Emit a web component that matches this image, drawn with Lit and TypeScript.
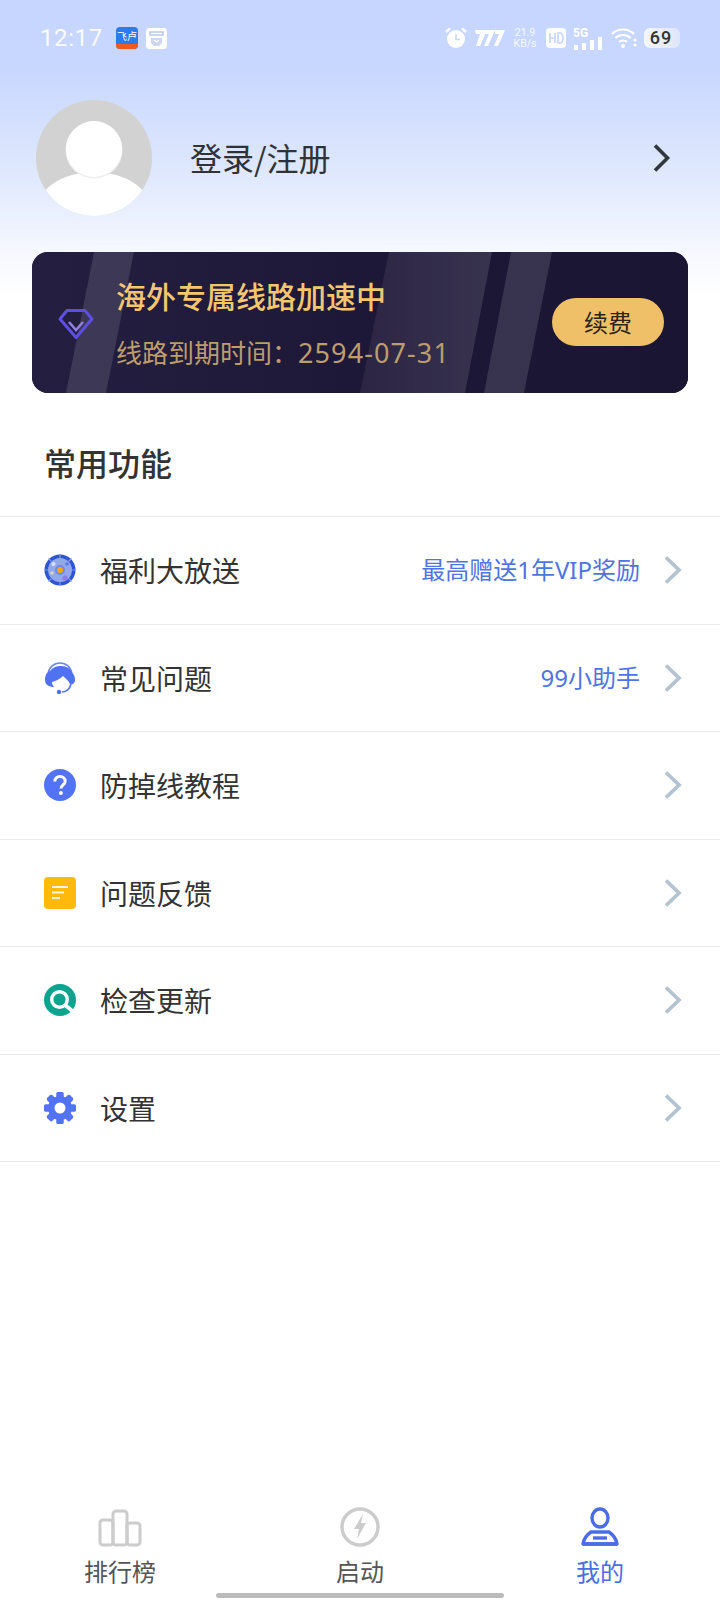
import { LitElement, html, css, svg } from "lit";
import { customElement } from "lit/decorators.js";

const chevron = html`<svg class="chev" width="20" height="30" viewBox="0 0 20 30"><path d="M3 2.500l13 12.500L3 27.500" fill="none" stroke="#b4c3d0" stroke-width="3.800"/></svg>`;

const icons: Record<string, unknown> = {
  wheel: html`<svg width="32" height="32" viewBox="0 0 32 32">
    <circle cx="16" cy="16" r="15.500" fill="#2f55d4"/><circle cx="16" cy="16" r="12" fill="#93a7ec"/>
    <g stroke="#7f97ea" stroke-width="1.200"><path d="M16 0v4M16 28v4M0 16h4M28 16h4M4.500 4.500l3 3M24.500 24.500l3 3M27.500 4.500l-3 3M7.500 24.500l-3 3"/></g>
    <circle cx="16" cy="16" r="5" fill="#6f8be8"/><circle cx="16" cy="16" r="3" fill="#f5a800"/><circle cx="9.500" cy="10" r="2" fill="#d7def7"/><circle cx="21" cy="24" r="2.500" fill="#8c7ce6"/><circle cx="23" cy="10" r="1.800" fill="#5c7de8"/><circle cx="8" cy="19" r="1.800" fill="#d9d8b8"/>
  </svg>`,
  agent: html`<svg width="32" height="32" viewBox="0 0 32 32">
    <path d="M4 12C5 5 10 1 16 1s11 4 12 11" fill="none" stroke="#6a86f0" stroke-width="1.600"/>
    <path d="M1 18C1 13 3 10 6 9 9 5 13 4 17 4c6 0 10 3 11 7 2 1 3 4 3 7s-2 5-5 4c-1-3-4-5-7-8-3 3-7 5-11 6 0 2 1 4 2 5-3 0-9-1-9-7z" fill="#4f71f2"/>
    <path d="M27 22c-1 5-5 8-9 8" fill="none" stroke="#5a7af0" stroke-width="1.700"/><circle cx="15" cy="30" r="2.200" fill="#4f71f2"/>
  </svg>`,
  help: html`<svg width="32" height="32" viewBox="0 0 32 32"><circle cx="16" cy="16" r="16" fill="#5273f6"/>
    <path d="M10.800 12.500c0-3 2.300-5 5.200-5s5.200 1.900 5.200 4.700c0 3.600-4.200 3.800-4.200 7.300" fill="none" stroke="#fff" stroke-width="3"/><circle cx="16.900" cy="24" r="2" fill="#fff"/></svg>`,
  note: html`<svg width="32" height="32" viewBox="0 0 32 32"><rect width="32" height="32" rx="4" fill="#ffb90a"/>
    <path d="M8 10h16M8 15.500h12M8 21h8" stroke="#fff" stroke-opacity=".85" stroke-width="2"/></svg>`,
  search: html`<svg width="32" height="32" viewBox="0 0 32 32"><circle cx="16" cy="16" r="16" fill="#0da48f"/>
    <circle cx="15.500" cy="15.500" r="7.800" fill="none" stroke="#fff" stroke-width="3.400"/><path d="M20.500 20.500l8.500 7" stroke="#fff" stroke-width="3.800"/></svg>`,
  gear: html`<svg width="32" height="32" viewBox="0 0 32 32"><g fill="#5273f6"><circle cx="16" cy="16" r="12"/>
    ${[0, 45, 90, 135, 180, 225, 270, 315].map((a) => svg`<rect x="12.500" y="0" width="7" height="32" rx="1.500" transform="rotate(${a} 16 16)"/>`)}</g>
    <circle cx="16" cy="16" r="5.500" fill="#fff"/></svg>`,
};

const rows = [
  { icon: "wheel", label: "福利大放送", note: "最高赠送1年VIP奖励" },
  { icon: "agent", label: "常见问题", note: "99小助手" },
  { icon: "help", label: "防掉线教程", note: "" },
  { icon: "note", label: "问题反馈", note: "" },
  { icon: "search", label: "检查更新", note: "" },
  { icon: "gear", label: "设置", note: "" },
];

@customElement("app-root")
export class AppRoot extends LitElement {
  static styles = css`
    :host {
      display: flex;
      flex-direction: column;
      width: 720px;
      height: 1600px;
      overflow: hidden;
      background: #fff;
      font-family: "Noto Sans CJK SC", "Noto Sans", sans-serif;
      color: #333;
    }
    .top {
      background: linear-gradient(180deg, #c6d6fe 0, #c8d7fe 70px, #e3ebfd 190px, #f7f9ff 255px, #fff 300px);
      padding: 0 32px;
      height: 400px;
      box-sizing: border-box;
      flex: none;
    }
    .status {
      height: 76px;
      display: flex;
      align-items: center;
      gap: 16px;
      margin: 0 0 0 8px;
      color: #fff;
    }
    .time { font: 400 24px/32px Roboto, sans-serif; letter-spacing: 0.6px; width: 60px; opacity: 0.9; }
    .apps { display: flex; align-items: center; gap: 8px; }
    .sb-right { margin-left: auto; display: flex; align-items: center; gap: 7.500px; margin-right: 8px; }
    .speed { font: 400 10.500px/11px Roboto, sans-serif; text-align: center; width: 26px; opacity: .85; }
    .batt { background: linear-gradient(90deg, #f4f6fc, #dfe6f9); color: #333; font: 500 18px/20px Roboto, sans-serif; letter-spacing: 1px; width: 36px; height: 20px; border-radius: 6px; text-align: center; text-indent: -2px; }
    .profile {
      display: flex;
      align-items: center;
      height: 116px;
      margin: 24px 0 0 4px;
    }
    .avatar { flex: none; }
    .login { font-size: 32px; line-height: 40px; margin-left: 38px; color: #2f3338; flex: 1; margin-top: -3px; }
    .go { margin-right: 16px; }
    .card {
      position: relative;
      overflow: hidden;
      margin-top: 36px;
      height: 141px;
      border-radius: 16px;
      background: #1c1635;
      display: flex;
      align-items: center;
      box-sizing: border-box;
      padding: 0 24px 0 26px;
    }
    .stripes { position: absolute; left: 0; top: 0; }
    .gem, .info, .renew { position: relative; }
    .gem { margin-top: 2px; }
    .info { margin-left: 22px; flex: 1; }
    .title { font-size: 30px; line-height: 42px; font-weight: 500; color: #f3c66f; }
    .sub { font-size: 26px; line-height: 36px; color: #bd9d6b; margin-top: 18px; }
    .digits { font-family: "Noto Sans", sans-serif; font-size: 27px; letter-spacing: 1.100px; }
    .renew {
      width: 112px;
      height: 48px;
      margin-top: -2px;
      border-radius: 24px;
      background: #f0c068;
      color: #2a2416;
      font-size: 24px;
      line-height: 48px;
      text-align: center;
    }
    h2 {
      margin: 0;
      height: 117px;
      box-sizing: border-box;
      padding: 40px 0 0 44px;
      font-size: 32px;
      line-height: 44px;
      font-weight: 500;
      color: #333;
      border-bottom: 1px solid #e8eaec;
    }
    .row {
      height: 107.500px;
      box-sizing: border-box;
      display: flex;
      align-items: center;
      border-bottom: 1px solid #e8eaec;
      padding: 0 37px 0 44px;
    }
    .ic { width: 32px; height: 34px; display: flex; align-items: center; justify-content: center; }
    .lbl { font-size: 28px; line-height: 40px; margin-left: 24px; flex: 1; color: #333; }
    .note { font-size: 24px; line-height: 34px; color: #4f74e3; margin-right: 23px; font-family: "Noto Sans", "Noto Sans CJK SC", sans-serif; }
    .spacer { flex: 1; }
    .tabs {
      height: 110px;
      display: grid;
      grid-template-columns: 240px 240px 240px;
      flex: none;
      position: relative;
    }
    .tab { display: flex; flex-direction: column; align-items: center; font-size: 24px; line-height: 32px; color: #555; }
    .tab svg { margin-top: 16px; height: 42px; margin-bottom: 7px; }
    .tab.on { color: #4a6de5; }
    .home { position: absolute; left: 216px; bottom: 2px; width: 288px; height: 5px; border-radius: 3px; background: #bbb; }
  `;

  render() {
    return html`
      <div class="top">
        <div class="status">
          <span class="time">12:17</span>
          <div class="apps">
            <svg width="22" height="22" viewBox="0 0 22 22"><rect width="22" height="22" rx="4" fill="#2b7be8"/><path d="M0 17h22v1a4 4 0 0 1-4 4H4a4 4 0 0 1-4-4z" fill="#ef5a1f"/><text x="11" y="13" font-size="10" fill="#fff" text-anchor="middle">飞卢</text></svg>
            <svg width="21" height="21" viewBox="0 0 21 21"><rect width="21" height="21" rx="3.500" fill="#fff"/><path d="M4 4h13v3H4z" fill="none" stroke="#b9c7ee" stroke-width="1.500"/><path d="M5 10h11v5l-3 3H8l-3-3z" fill="#ccd6f0"/><path d="M8 12l2.500 2L13 12" fill="none" stroke="#fff" stroke-width="1.300"/></svg>
          </div>
          <div class="sb-right">
            <svg width="22" height="22" viewBox="0 0 22 22"><circle cx="11" cy="12" r="9" fill="#fff"/><path d="M1 5l4-3.500M21 5l-4-3.500" stroke="#fff" stroke-width="2.500"/><path d="M11 7v5.500h4" fill="none" stroke="#c8d7fe" stroke-width="1.500"/></svg>
            <svg width="30" height="16" viewBox="0 0 30 16"><path d="M0 0h12L5 16H1l4-12H1zM10 0h10l-7 16H9l5-12h-4zM20 0h10l-7 16h-4l5-12h-4z" fill="#fff"/></svg>
            <div class="speed">21.9<br />KB/s</div>
            <svg width="20" height="20" viewBox="0 0 20 20"><rect width="20" height="20" rx="4" fill="#fff"/><path d="M4 5v10M9 5v10M4 10h5M12 5v10h2c2 0 3-2 3-5s-1-5-3-5z" fill="none" stroke="#c8d7fe" stroke-width="1.700"/></svg>
            <svg width="30" height="24" viewBox="0 0 30 24"><text x="0" y="11" font-size="12" font-weight="700" fill="#fff" font-family="Roboto">5G</text><path d="M1 19h4v5H1zM9 17h4v7H9zM17 14h4v10h-4zM25 11h4v13h-4z" fill="#fff"/></svg>
            <svg width="26" height="20" viewBox="0 0 26 20"><g fill="none" stroke="#fff" stroke-width="2.200"><path d="M1 6c6-6 16-6 22 0M4.500 10c4-4 11-4 15 0M8 14c2-2 6-2 8 0"/></g><circle cx="12" cy="18" r="2" fill="#fff"/><circle cx="24" cy="12" r="1.500" fill="#fff"/><circle cx="24" cy="17" r="1.500" fill="#fff"/></svg>
            <div class="batt">69</div>
          </div>
        </div>
        <div class="profile">
          <svg class="avatar" width="116" height="116" viewBox="0 0 116 116">
            <defs><clipPath id="av"><circle cx="58" cy="58" r="58"/></clipPath></defs>
            <circle cx="58" cy="58" r="58" fill="#d2d2d2"/>
            <g clip-path="url(#av)"><ellipse cx="58" cy="112" rx="58" ry="40" fill="#fff"/>
            <circle cx="58" cy="50" r="28.500" fill="#eee"/><circle cx="58" cy="49" r="28" fill="#fff"/></g>
          </svg>
          <div class="login">登录/注册</div>
          <svg class="go" width="20" height="30" viewBox="0 0 20 30"><path d="M3 2.500l12.500 12.500L3 27.500" fill="none" stroke="#30373d" stroke-width="3.600"/></svg>
        </div>
        <div class="card">
          <svg class="stripes" width="656" height="141" viewBox="0 0 656 141">
            <defs>
              <linearGradient id="bg" x1="0" x2="1" y1="0" y2="0"><stop offset="0" stop-color="#241e40"/><stop offset=".5" stop-color="#1e1838"/><stop offset="1" stop-color="#1b1534"/></linearGradient>
              <linearGradient id="s2" x1="0" x2="1" y1="0" y2="0"><stop offset="0" stop-color="#fff" stop-opacity=".06"/><stop offset="1" stop-color="#fff" stop-opacity=".12"/></linearGradient>
            </defs>
            <rect width="656" height="141" fill="url(#bg)"/>
            <path d="M62 0h40L74 141H34z" fill="#fff" fill-opacity=".12"/>
            <path d="M357 0h103l-27 141H328z" fill="url(#s2)"/>
            <path d="M479 0h41l-28 141h-40z" fill="#fff" fill-opacity=".12"/>
          </svg>
          <svg class="gem" width="36" height="32" viewBox="0 0 36 32"><path d="M9 2.500h18l7 8.500-16 18.500L2 11z" fill="none" stroke="#5f4fe0" stroke-width="3" stroke-linejoin="round"/><path d="M11 14l7 8 7-8" fill="none" stroke="#8f7fe6" stroke-width="2.500"/></svg>
          <div class="info">
            <div class="title">海外专属线路加速中</div>
            <div class="sub">线路到期时间：<span class="digits">2594-07-31</span></div>
          </div>
          <div class="renew">续费</div>
        </div>
      </div>
      <h2>常用功能</h2>
      ${rows.map(
        (r) => html`<div class="row">
          <span class="ic">${icons[r.icon]}</span>
          <span class="lbl">${r.label}</span>
          ${r.note ? html`<span class="note">${r.note}</span>` : ""}
          ${chevron}
        </div>`
      )}
      <div class="spacer"></div>
      <div class="tabs">
        <div class="tab">
          <svg width="44" height="42" viewBox="0 0 44 42"><g fill="none" stroke="#ccc" stroke-width="3"><rect x="2" y="14" width="13" height="25" rx="3"/><rect x="15" y="5" width="14" height="34" rx="3"/><rect x="29" y="17" width="13" height="22" rx="3"/></g></svg>
          排行榜
        </div>
        <div class="tab">
          <svg width="42" height="42" viewBox="0 0 42 42"><circle cx="21" cy="21" r="18" fill="none" stroke="#ccc" stroke-width="3.400"/><path d="M24 8l-9 15h5l-2 10 9-16h-5z" fill="#ccc"/></svg>
          启动
        </div>
        <div class="tab on">
          <svg width="40" height="42" viewBox="0 0 40 42"><ellipse cx="20" cy="12" rx="8" ry="9" fill="none" stroke="#4a6de5" stroke-width="3.400"/><path d="M11 26h18c3 2 7 6 8 12H3c1-6 5-10 8-12z" fill="#fff" stroke="#4a6de5" stroke-width="3.400" stroke-linejoin="round"/><path d="M3 38h34" stroke="#4a6de5" stroke-width="3.400"/><path d="M13 32h14" stroke="#4a6de5" stroke-width="3.400"/></svg>
          我的
        </div>
        <div class="home"></div>
      </div>
    `;
  }
}
